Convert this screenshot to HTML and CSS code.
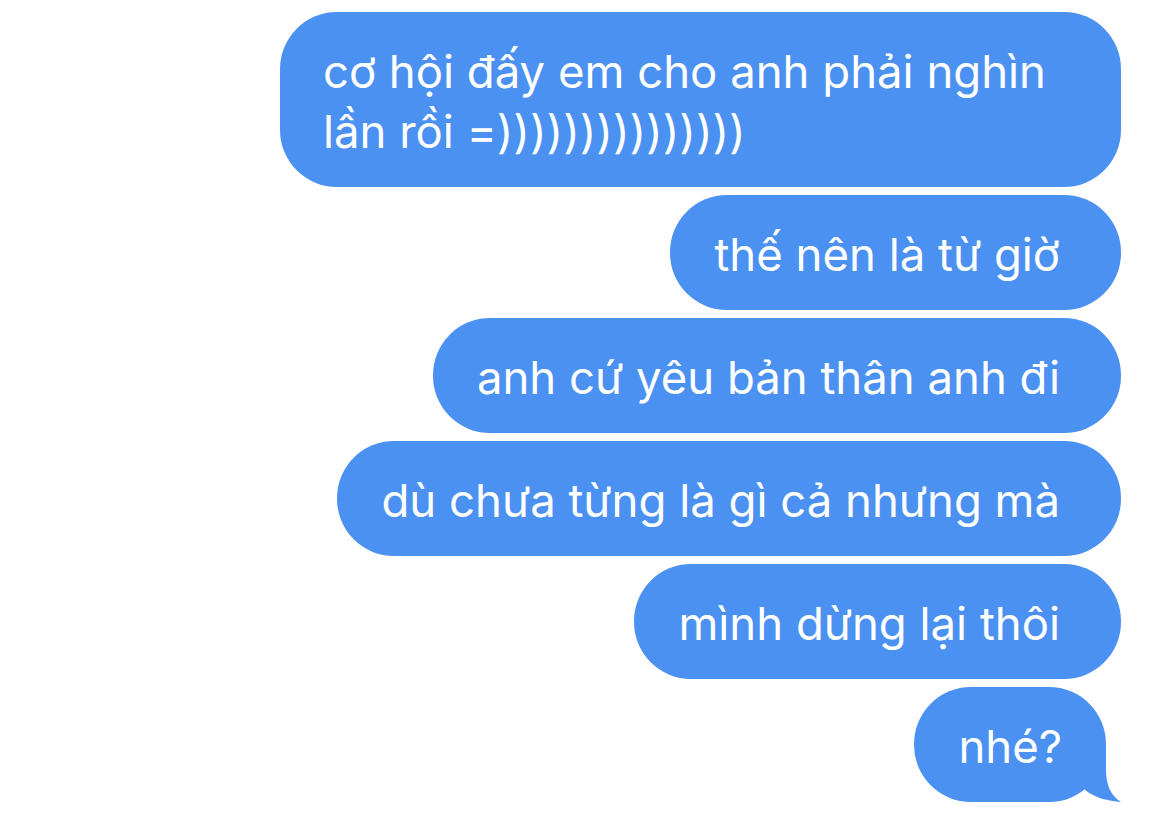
FILE: index.html
```html
<!DOCTYPE html>
<html lang="vi">
  <head>
    <meta charset="UTF-8" />
    <meta name="viewport" content="width=device-width, initial-scale=1.0" />
    <title>Tin nhắn</title>
    <link rel="stylesheet" href="styles.css">
  </head>
  <body>
    <div class="thread">
      <div class="bubble first">cơ hội đấy em cho anh phải nghìn<br>lần rồi =)))))))))))))))</div>
      <div class="bubble">thế nên là từ giờ</div>
      <div class="bubble">anh cứ yêu bản thân anh đi</div>
      <div class="bubble">dù chưa từng là gì cả nhưng mà</div>
      <div class="bubble">mình dừng lại thôi</div>
      <div class="bubble last">nhé?
        <svg class="tail" width="42" height="58" viewBox="0 0 42 58">
          <path d="M26 0 V25 C26 40 31 51 41 57 C28 56 15 53 5 45 V0 Z" fill="#4b91f2" />
        </svg>
      </div>
    </div>
  </body>
</html>
```

FILE: styles.css
```css
body {
  margin: 0;
  padding: 0;
  background: #ffffff;
  font-family: 'Inter', 'Noto Sans', sans-serif;
}
.thread {
  display: flex;
  flex-direction: column;
  align-items: flex-end;
  gap: 8px;
  padding: 12px 49px 0 0;
}
.bubble {
  position: relative;
  background: #4b91f2;
  color: #ffffff;
  font-size: 45.5px;
  line-height: 60px;
  padding: 30px 61px 25px 44px;
  border-radius: 57px;
}
.bubble.first {
  padding-left: 43px;
  padding-right: 75px;
}
.bubble.last {
  margin-right: 15px;
  padding-right: 44px;
}
.tail {
  position: absolute;
  right: -16px;
  bottom: -1px;
}
```
